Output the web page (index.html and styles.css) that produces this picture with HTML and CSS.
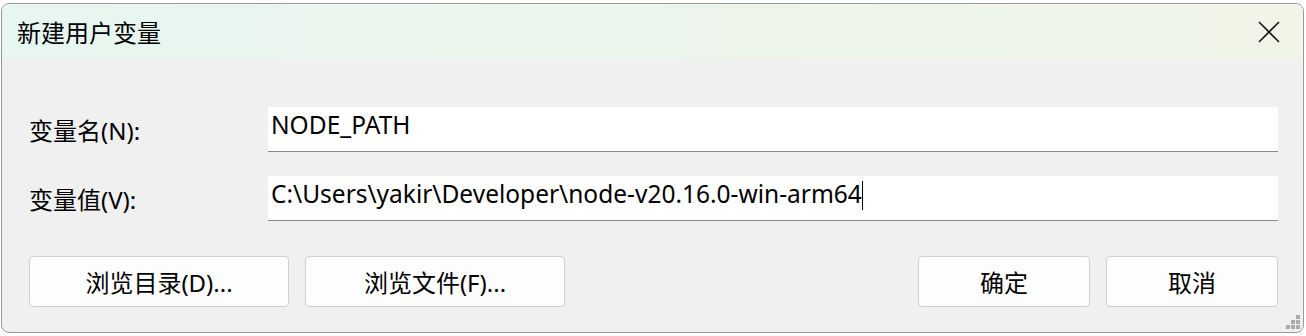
FILE: index.html
```html
<!DOCTYPE html>
<html lang="zh-CN">
<head>
  <meta charset="UTF-8">
  <title>新建用户变量</title>
  <link rel="stylesheet" href="styles.css">
</head>
<body>
  <div class="backdrop">
    <div class="dialog">
      <div class="titlebar">
        <span class="title">新建用户变量</span>
        <svg class="close" width="22" height="22" viewBox="0 0 22 22">
          <path d="M1 1 L21 21 M21 1 L1 21" stroke="#1a1a1a" stroke-width="1.6" fill="none"/>
        </svg>
      </div>
      <div class="content">
        <div class="row">
          <label class="label">变量名(N):</label>
          <div class="field">NODE_PATH</div>
        </div>
        <div class="row">
          <label class="label">变量值(V):</label>
          <div class="field">C:\Users\yakir\Developer\node-v20.16.0-win-arm64<span class="caret"></span></div>
        </div>
        <div class="buttons">
          <div class="btn wide">浏览目录(D)...</div>
          <div class="btn wide">浏览文件(F)...</div>
          <div class="spacer"></div>
          <div class="btn">确定</div>
          <div class="btn">取消</div>
        </div>
      </div>
      <svg class="grip" width="14" height="14" viewBox="0 0 14 14">
        <rect x="10" y="0" width="4" height="4" fill="#aaa"/>
        <rect x="5" y="5" width="4" height="4" fill="#aaa"/>
        <rect x="10" y="5" width="4" height="4" fill="#aaa"/>
        <rect x="0" y="10" width="4" height="4" fill="#aaa"/>
        <rect x="5" y="10" width="4" height="4" fill="#aaa"/>
        <rect x="10" y="10" width="4" height="4" fill="#aaa"/>
      </svg>
    </div>
  </div>
</body>
</html>
```

FILE: styles.css
```css
body { margin: 0; background: #ffffff; font-family: "Noto Sans", "Noto Sans CJK SC", sans-serif; color: #000; }
.backdrop { padding: 3px 2px 3px 1px; }
.dialog { position: relative; height: 328px; border: 1px solid #9a9a9a; border-radius: 8px; background: #f0f0f0; overflow: hidden; display: flex; flex-direction: column; }
.titlebar { height: 55px; flex-shrink: 0; display: flex; align-items: center; justify-content: space-between; padding: 0 23px 0 15px; background: linear-gradient(90deg, #e7f6f1, #edf5ea 60%, #f1f5e8); }
.title { font-size: 24px; font-family: "Noto Sans CJK SC", sans-serif; }
.close { display: block; }
.content { padding: 48px 25px 0 27px; }
.row { display: flex; align-items: center; margin-bottom: 24px; }
.label { width: 239px; font-size: 24px; font-family: "Noto Sans", "Noto Sans CJK SC", sans-serif; }
.field { flex: 1; height: 44px; background: #fff; border-bottom: 1px solid #8a8a8a; padding: 0 3px; font-size: 24.5px; line-height: 35px; white-space: nowrap; }
.caret { display: inline-block; width: 1px; height: 29px; background: #000; vertical-align: -7px; }
.buttons { display: flex; gap: 16px; margin-top: 35px; }
.btn { width: 258px; height: 49px; background: #fdfdfd; border: 1px solid #cfcfcf; border-radius: 4px; display: flex; align-items: center; justify-content: center; font-size: 24px; font-family: "Noto Sans", "Noto Sans CJK SC", sans-serif; }
.btn:not(.wide) { width: 170px; }
.spacer { flex: 1; }
.grip { position: absolute; right: 3px; bottom: 3px; }
```
